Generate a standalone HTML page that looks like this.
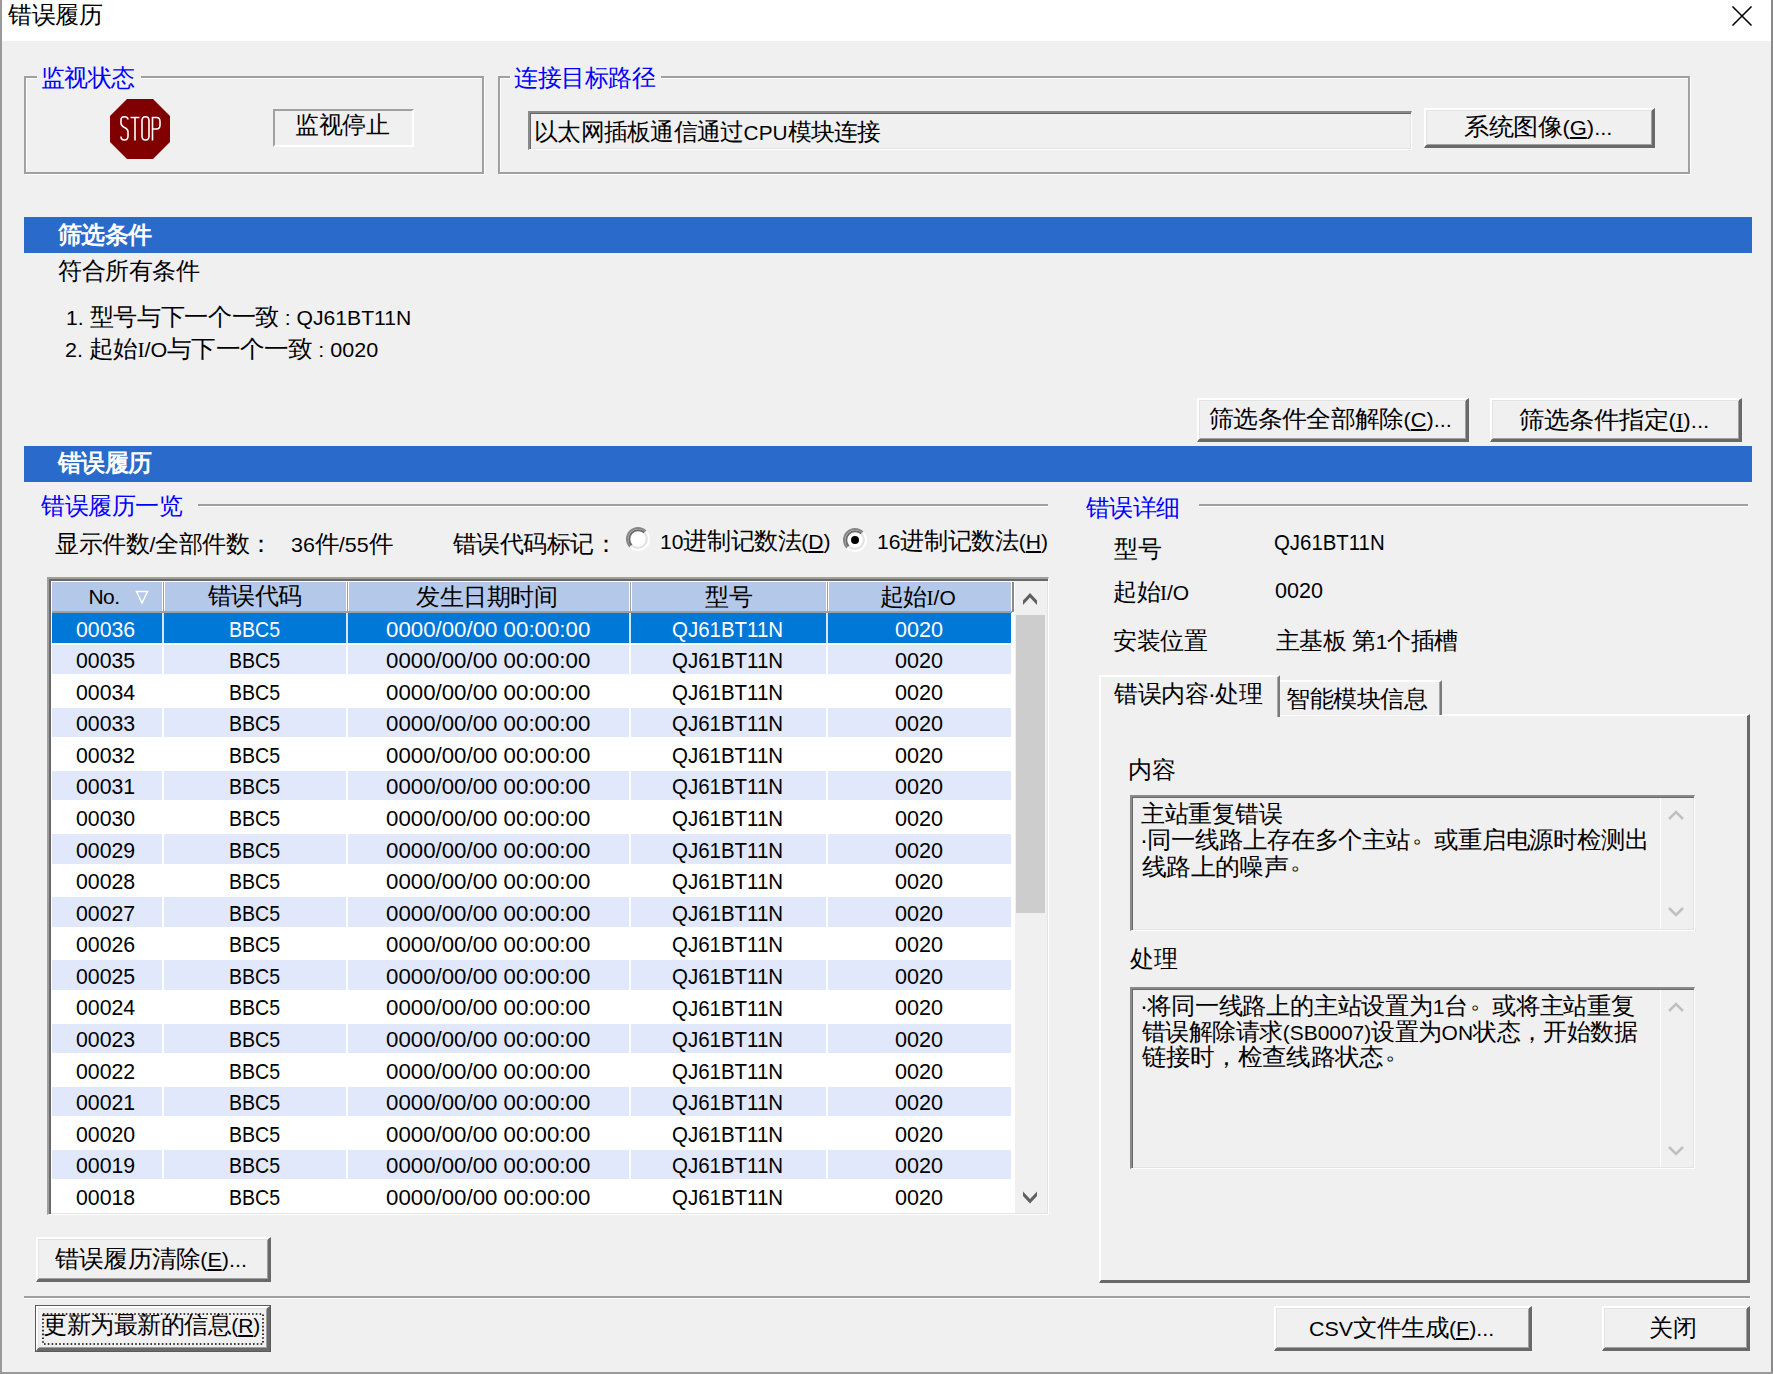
<!DOCTYPE html><html><head><meta charset="utf-8"><title>错误履历</title><style>
*{box-sizing:border-box;margin:0;padding:0}
html,body{width:1773px;height:1374px;overflow:hidden}
body{position:relative;background:#f0f0f0;font-family:"Liberation Sans",sans-serif;font-size:23.5px;color:#000}
.a{position:absolute}
.t{position:absolute;white-space:nowrap;line-height:1;letter-spacing:-0.5px}
.l{letter-spacing:0}
i.s{font-style:normal;font-family:"Liberation Serif",serif}
.gb{position:absolute;border:2px solid #a0a0a0;box-shadow:inset 1px 1px 0 #fff,1px 1px 0 #fff}
.gl{position:absolute;background:#f0f0f0}
.btn{position:absolute;background:#f0f0f0;border-style:solid;border-width:2px 3px 3px 2px;border-color:#fff #696969 #696969 #fff;box-shadow:inset 1px 1px 0 #e3e3e3,inset -1px -1px 0 #a0a0a0}
.sunk{position:absolute;border-style:solid;border-width:2px 1px 1px 2px;border-color:#8a8a8a #fff #fff #8a8a8a;box-shadow:inset 1px 1px 0 #696969,inset -1px -1px 0 #e3e3e3}
.bar{position:absolute;left:24px;width:1728px;height:36px;background:#2a6acb}
.hdr{position:absolute;height:30px;background:#b4c8e9}
.sep{position:absolute;height:2px;background:#a0a0a0;box-shadow:0 1px 0 #fff}
</style></head><body>
<div class="a" style="left:0;top:0;width:1773px;height:41px;background:#fff"></div>
<div class="t" style="left:8.00px;top:3.50px;font-size:23.5px;color:#000;">错误履历</div>
<svg class="a" style="left:1730px;top:4px" width="24" height="24" viewBox="0 0 24 24"><path d="M2.5 2.5L21.5 21.5M21.5 2.5L2.5 21.5" stroke="#000" stroke-width="1.6"/></svg>
<div class="a" style="left:0;top:0;width:2px;height:1374px;background:#9a9a9a"></div>
<div class="a" style="left:1771px;top:0;width:2px;height:1374px;background:#8a8a8a"></div>
<div class="a" style="left:0;top:1372px;width:1773px;height:2px;background:#9a9a9a"></div>
<div class="gb" style="left:24px;top:76px;width:460px;height:98px"></div>
<div class="gl" style="left:37px;top:70px;width:104px;height:12px"></div>
<div class="t" style="left:40.60px;top:67.05px;font-size:23.5px;color:#0000ff;">监视状态</div>
<svg class="a" style="left:110px;top:99px" width="60" height="60" viewBox="0 0 60 60"><polygon points="17,0 43,0 60,17 60,43 43,60 17,60 0,43 0,17" fill="#800000"/>
<g fill="none" stroke="#fff" stroke-width="1.6">
<path d="M18 20.5 Q18 17.8 14.5 17.8 Q11 17.8 11 21 L11 24 Q11 27 14.5 28.5 Q18 30 18 33 L18 37 Q18 41 14.5 41 Q11 41 11 37.5"/>
<path d="M20.5 18.5 H29.5 M25 18.5 V41.5"/>
<path d="M35.5 17.8 Q32 17.8 32 22 V37 Q32 41 35.5 41 Q39 41 39 37 V22 Q39 17.8 35.5 17.8Z"/>
<path d="M42.5 41.5 V18.5 H46.5 Q50 18.5 50 22.5 V26 Q50 30 46.5 30 H42.5"/>
</g></svg>
<div class="a" style="left:273px;top:109px;width:141px;height:38px;border-style:solid;border-width:2px;border-color:#a0a0a0 #fff #fff #a0a0a0"></div>
<div class="t" style="left:295.00px;top:114.30px;font-size:23.5px;color:#000;">监视停止</div>
<div class="gb" style="left:498px;top:76px;width:1192px;height:98px"></div>
<div class="gl" style="left:510px;top:70px;width:151px;height:12px"></div>
<div class="t" style="left:514.00px;top:67.15px;font-size:23.5px;color:#0000ff;">连接目标路径</div>
<div class="sunk" style="left:528px;top:111px;width:884px;height:39px"></div>
<div class="t" style="left:534.00px;top:120.55px;font-size:23.5px;color:#000;transform:scaleX(0.9910);transform-origin:0 0;">以太网插板通信通过<span class="l" style="font-size:21px;letter-spacing:0px">CPU</span>模块连接</div>
<div class="btn" style="left:1424px;top:108px;width:231px;height:40px"></div>
<div class="t" style="left:1464.00px;top:116.15px;font-size:23.5px;color:#000;transform:scaleX(1.0468);transform-origin:0 0;">系统图像<span class="l" style="font-size:21px;letter-spacing:0px">(</span><u><span class="l" style="font-size:21px;letter-spacing:0px">G</span></u><span class="l" style="font-size:21px;letter-spacing:0px">)...</span></div>
<div class="bar" style="top:217px"></div>
<div class="t" style="left:57.60px;top:224.10px;font-size:23.5px;color:#fff;font-weight:bold">筛选条件</div>
<div class="t" style="left:58.00px;top:260.40px;font-size:23.5px;color:#000;">符合所有条件</div>
<div class="t" style="left:66.00px;top:305.75px;font-size:23.5px;color:#000;transform:scaleX(1.0059);transform-origin:0 0;"><span class="l" style="font-size:21px;letter-spacing:0px">1.</span> 型号与下一个一致 <span class="l" style="font-size:21px;letter-spacing:0px">: QJ61BT11N</span></div>
<div class="t" style="left:65.00px;top:338.15px;font-size:23.5px;color:#000;transform:scaleX(1.0265);transform-origin:0 0;"><span class="l" style="font-size:21px;letter-spacing:0px">2.</span> 起始<i class="s"><span class="l" style="font-size:21px;letter-spacing:0px">I</span></i><span class="l" style="font-size:21px;letter-spacing:0px">/O</span>与下一个一致 <span class="l" style="font-size:21px;letter-spacing:0px">: 0020</span></div>
<div class="btn" style="left:1197px;top:398px;width:272px;height:44px"></div>
<div class="t" style="left:1209.20px;top:408.10px;font-size:23.5px;color:#000;transform:scaleX(1.0345);transform-origin:0 0;">筛选条件全部解除<span class="l" style="font-size:21px;letter-spacing:0px">(</span><u><span class="l" style="font-size:21px;letter-spacing:0px">C</span></u><span class="l" style="font-size:21px;letter-spacing:0px">)...</span></div>
<div class="btn" style="left:1490px;top:398px;width:252px;height:44px"></div>
<div class="t" style="left:1519.00px;top:408.75px;font-size:23.5px;color:#000;transform:scaleX(1.0602);transform-origin:0 0;">筛选条件指定<span class="l" style="font-size:21px;letter-spacing:0px">(</span><u><i class="s"><span class="l" style="font-size:21px;letter-spacing:0px">I</span></i></u><span class="l" style="font-size:21px;letter-spacing:0px">)...</span></div>
<div class="bar" style="top:446px"></div>
<div class="t" style="left:57.60px;top:452.00px;font-size:23.5px;color:#fff;font-weight:bold">错误履历</div>
<div class="sep" style="left:198px;top:504px;width:850px"></div>
<div class="t" style="left:41.20px;top:494.75px;font-size:23.5px;color:#0000ff;">错误履历一览</div>
<div class="t" style="left:55.40px;top:533.15px;font-size:23.5px;color:#000;">显示件数<span class="l" style="font-size:21px;letter-spacing:0px">/</span>全部件数：</div>
<div class="t" style="left:291.40px;top:533.40px;font-size:23.5px;color:#000;transform:scaleX(1.0207);transform-origin:0 0;"><span class="l" style="font-size:21px;letter-spacing:0px">36</span>件<span class="l" style="font-size:21px;letter-spacing:0px">/55</span>件</div>
<div class="t" style="left:452.60px;top:532.65px;font-size:23.5px;color:#000;">错误代码标记：</div>
<div class="t" style="left:660.00px;top:530.25px;font-size:23.5px;color:#000;transform:scaleX(1.0030);transform-origin:0 0;"><span class="l" style="font-size:21px;letter-spacing:0px">10</span>进制记数法<span class="l" style="font-size:21px;letter-spacing:0px">(</span><u><span class="l" style="font-size:21px;letter-spacing:0px">D</span></u><span class="l" style="font-size:21px;letter-spacing:0px">)</span></div>
<div class="t" style="left:877.00px;top:530.25px;font-size:23.5px;color:#000;transform:scaleX(1.0060);transform-origin:0 0;"><span class="l" style="font-size:21px;letter-spacing:0px">16</span>进制记数法<span class="l" style="font-size:21px;letter-spacing:0px">(</span><u><span class="l" style="font-size:21px;letter-spacing:0px">H</span></u><span class="l" style="font-size:21px;letter-spacing:0px">)</span></div>
<svg class="a" style="left:625.3px;top:526.4px" width="26" height="26" viewBox="0 0 26 26"><circle cx="13" cy="13" r="8" fill="#fff"/><path d="M20.78 5.22 A11 11 0 0 0 5.22 20.78" fill="none" stroke="#858585" stroke-width="2"/><path d="M19.36 6.64 A9 9 0 0 0 6.64 19.36" fill="none" stroke="#6a6a6a" stroke-width="2"/><path d="M5.22 20.78 A11 11 0 0 0 20.78 5.22" fill="none" stroke="#fff" stroke-width="2"/><path d="M6.64 19.36 A9 9 0 0 0 19.36 6.64" fill="none" stroke="#e3e3e3" stroke-width="2"/></svg>
<svg class="a" style="left:842.4px;top:526.6px" width="26" height="26" viewBox="0 0 26 26"><circle cx="13" cy="13" r="8" fill="#fff"/><path d="M20.78 5.22 A11 11 0 0 0 5.22 20.78" fill="none" stroke="#858585" stroke-width="2"/><path d="M19.36 6.64 A9 9 0 0 0 6.64 19.36" fill="none" stroke="#6a6a6a" stroke-width="2"/><path d="M5.22 20.78 A11 11 0 0 0 20.78 5.22" fill="none" stroke="#fff" stroke-width="2"/><path d="M6.64 19.36 A9 9 0 0 0 19.36 6.64" fill="none" stroke="#e3e3e3" stroke-width="2"/><circle cx="13" cy="13" r="4" fill="#000"/></svg>
<div class="a" style="left:47px;top:577px;width:1002px;height:638px;background:#fff;border-style:solid;border-width:2px 1px 1px 2px;border-color:#a0a0a0 #fff #fff #a0a0a0;box-shadow:inset 2px 2px 0 #696969,inset -1px -1px 0 #e3e3e3"></div>
<div class="hdr" style="left:52px;width:110px;top:582px"></div>
<div class="hdr" style="left:164px;width:182px;top:582px"></div>
<div class="hdr" style="left:348px;width:281px;top:582px"></div>
<div class="hdr" style="left:631px;width:195px;top:582px"></div>
<div class="hdr" style="left:828px;width:183px;top:582px"></div>
<div class="a" style="left:52px;top:611px;width:960px;height:2px;background:#a0a0a0"></div>
<div class="a" style="left:163px;top:582px;width:1px;height:29px;background:#a0a0a0"></div>
<div class="a" style="left:164px;top:582px;width:1px;height:29px;background:#fff"></div>
<div class="a" style="left:347px;top:582px;width:1px;height:29px;background:#a0a0a0"></div>
<div class="a" style="left:348px;top:582px;width:1px;height:29px;background:#fff"></div>
<div class="a" style="left:630px;top:582px;width:1px;height:29px;background:#a0a0a0"></div>
<div class="a" style="left:631px;top:582px;width:1px;height:29px;background:#fff"></div>
<div class="a" style="left:827px;top:582px;width:1px;height:29px;background:#a0a0a0"></div>
<div class="a" style="left:828px;top:582px;width:1px;height:29px;background:#fff"></div>
<div class="t" style="left:88.40px;top:585.75px;font-size:21px;color:#000;">No.</div>
<svg class="a" style="left:135px;top:589px" width="14" height="16" viewBox="0 0 14 16"><path d="M1.5 2.5 H12.5 L7 14Z" fill="none" stroke="#fff" stroke-width="1.5"/></svg>
<div class="t" style="left:207.80px;top:585.25px;font-size:23.5px;color:#000;">错误代码</div>
<div class="t" style="left:416.00px;top:586.25px;font-size:23.5px;color:#000;">发生日期时间</div>
<div class="t" style="left:705.20px;top:586.30px;font-size:23.5px;color:#000;">型号</div>
<div class="t" style="left:879.60px;top:586.30px;font-size:23.5px;color:#000;">起始<i class="s"><span class="l" style="font-size:21px;letter-spacing:0px">I</span></i><span class="l" style="font-size:21px;letter-spacing:0px">/O</span></div>
<div class="a" style="left:52px;top:613.00px;width:110px;height:29.58px;background:#0078d7"></div>
<div class="a" style="left:162px;top:613.00px;width:2px;height:29.58px;background:#d2e5f8"></div>
<div class="a" style="left:164px;top:613.00px;width:182px;height:29.58px;background:#0078d7"></div>
<div class="a" style="left:346px;top:613.00px;width:2px;height:29.58px;background:#d2e5f8"></div>
<div class="a" style="left:348px;top:613.00px;width:281px;height:29.58px;background:#0078d7"></div>
<div class="a" style="left:629px;top:613.00px;width:2px;height:29.58px;background:#d2e5f8"></div>
<div class="a" style="left:631px;top:613.00px;width:195px;height:29.58px;background:#0078d7"></div>
<div class="a" style="left:826px;top:613.00px;width:2px;height:29.58px;background:#d2e5f8"></div>
<div class="a" style="left:828px;top:613.00px;width:183px;height:29.58px;background:#0078d7"></div>
<div class="t" style="left:76.30px;top:618.50px;font-size:22px;color:#fff;letter-spacing:0;transform:scaleX(0.9676);transform-origin:0 0;">00036</div>
<div class="t" style="left:229.40px;top:618.50px;font-size:22px;color:#fff;letter-spacing:0;transform:scaleX(0.8884);transform-origin:0 0;">BBC5</div>
<div class="t" style="left:385.90px;top:618.50px;font-size:22px;color:#fff;letter-spacing:0;transform:scaleX(1.0120);transform-origin:0 0;">0000/00/00 00:00:00</div>
<div class="t" style="left:672.30px;top:618.58px;font-size:22px;color:#fff;letter-spacing:0;transform:scaleX(0.9304);transform-origin:0 0;">QJ61BT11N</div>
<div class="t" style="left:895.20px;top:618.50px;font-size:22px;color:#fff;letter-spacing:0;transform:scaleX(0.9811);transform-origin:0 0;">0020</div>
<div class="a" style="left:52px;top:644.58px;width:110px;height:29.58px;background:#e1e8fc"></div>
<div class="a" style="left:164px;top:644.58px;width:182px;height:29.58px;background:#e1e8fc"></div>
<div class="a" style="left:348px;top:644.58px;width:281px;height:29.58px;background:#e1e8fc"></div>
<div class="a" style="left:631px;top:644.58px;width:195px;height:29.58px;background:#e1e8fc"></div>
<div class="a" style="left:828px;top:644.58px;width:183px;height:29.58px;background:#e1e8fc"></div>
<div class="t" style="left:76.30px;top:650.08px;font-size:22px;color:#000;transform:scaleX(0.9676);transform-origin:0 0;letter-spacing:0">00035</div>
<div class="t" style="left:229.40px;top:650.08px;font-size:22px;color:#000;transform:scaleX(0.8884);transform-origin:0 0;letter-spacing:0">BBC5</div>
<div class="t" style="left:385.90px;top:650.08px;font-size:22px;color:#000;transform:scaleX(1.0120);transform-origin:0 0;letter-spacing:0">0000/00/00 00:00:00</div>
<div class="t" style="left:672.30px;top:650.16px;font-size:22px;color:#000;transform:scaleX(0.9304);transform-origin:0 0;letter-spacing:0">QJ61BT11N</div>
<div class="t" style="left:895.20px;top:650.08px;font-size:22px;color:#000;transform:scaleX(0.9811);transform-origin:0 0;letter-spacing:0">0020</div>
<div class="a" style="left:52px;top:676.16px;width:110px;height:29.58px;background:#fff"></div>
<div class="a" style="left:164px;top:676.16px;width:182px;height:29.58px;background:#fff"></div>
<div class="a" style="left:348px;top:676.16px;width:281px;height:29.58px;background:#fff"></div>
<div class="a" style="left:631px;top:676.16px;width:195px;height:29.58px;background:#fff"></div>
<div class="a" style="left:828px;top:676.16px;width:183px;height:29.58px;background:#fff"></div>
<div class="t" style="left:76.30px;top:681.66px;font-size:22px;color:#000;letter-spacing:0;transform:scaleX(0.9676);transform-origin:0 0;">00034</div>
<div class="t" style="left:229.40px;top:681.66px;font-size:22px;color:#000;letter-spacing:0;transform:scaleX(0.8884);transform-origin:0 0;">BBC5</div>
<div class="t" style="left:385.90px;top:681.66px;font-size:22px;color:#000;letter-spacing:0;transform:scaleX(1.0120);transform-origin:0 0;">0000/00/00 00:00:00</div>
<div class="t" style="left:672.30px;top:681.74px;font-size:22px;color:#000;letter-spacing:0;transform:scaleX(0.9304);transform-origin:0 0;">QJ61BT11N</div>
<div class="t" style="left:895.20px;top:681.66px;font-size:22px;color:#000;letter-spacing:0;transform:scaleX(0.9811);transform-origin:0 0;">0020</div>
<div class="a" style="left:52px;top:707.74px;width:110px;height:29.58px;background:#e1e8fc"></div>
<div class="a" style="left:164px;top:707.74px;width:182px;height:29.58px;background:#e1e8fc"></div>
<div class="a" style="left:348px;top:707.74px;width:281px;height:29.58px;background:#e1e8fc"></div>
<div class="a" style="left:631px;top:707.74px;width:195px;height:29.58px;background:#e1e8fc"></div>
<div class="a" style="left:828px;top:707.74px;width:183px;height:29.58px;background:#e1e8fc"></div>
<div class="t" style="left:76.30px;top:713.24px;font-size:22px;color:#000;letter-spacing:0;transform:scaleX(0.9676);transform-origin:0 0;">00033</div>
<div class="t" style="left:229.40px;top:713.24px;font-size:22px;color:#000;letter-spacing:0;transform:scaleX(0.8884);transform-origin:0 0;">BBC5</div>
<div class="t" style="left:385.90px;top:713.24px;font-size:22px;color:#000;letter-spacing:0;transform:scaleX(1.0120);transform-origin:0 0;">0000/00/00 00:00:00</div>
<div class="t" style="left:672.30px;top:713.32px;font-size:22px;color:#000;letter-spacing:0;transform:scaleX(0.9304);transform-origin:0 0;">QJ61BT11N</div>
<div class="t" style="left:895.20px;top:713.24px;font-size:22px;color:#000;letter-spacing:0;transform:scaleX(0.9811);transform-origin:0 0;">0020</div>
<div class="a" style="left:52px;top:739.32px;width:110px;height:29.58px;background:#fff"></div>
<div class="a" style="left:164px;top:739.32px;width:182px;height:29.58px;background:#fff"></div>
<div class="a" style="left:348px;top:739.32px;width:281px;height:29.58px;background:#fff"></div>
<div class="a" style="left:631px;top:739.32px;width:195px;height:29.58px;background:#fff"></div>
<div class="a" style="left:828px;top:739.32px;width:183px;height:29.58px;background:#fff"></div>
<div class="t" style="left:76.30px;top:744.82px;font-size:22px;color:#000;letter-spacing:0;transform:scaleX(0.9676);transform-origin:0 0;">00032</div>
<div class="t" style="left:229.40px;top:744.82px;font-size:22px;color:#000;letter-spacing:0;transform:scaleX(0.8884);transform-origin:0 0;">BBC5</div>
<div class="t" style="left:385.90px;top:744.82px;font-size:22px;color:#000;letter-spacing:0;transform:scaleX(1.0120);transform-origin:0 0;">0000/00/00 00:00:00</div>
<div class="t" style="left:672.30px;top:744.90px;font-size:22px;color:#000;letter-spacing:0;transform:scaleX(0.9304);transform-origin:0 0;">QJ61BT11N</div>
<div class="t" style="left:895.20px;top:744.82px;font-size:22px;color:#000;letter-spacing:0;transform:scaleX(0.9811);transform-origin:0 0;">0020</div>
<div class="a" style="left:52px;top:770.90px;width:110px;height:29.58px;background:#e1e8fc"></div>
<div class="a" style="left:164px;top:770.90px;width:182px;height:29.58px;background:#e1e8fc"></div>
<div class="a" style="left:348px;top:770.90px;width:281px;height:29.58px;background:#e1e8fc"></div>
<div class="a" style="left:631px;top:770.90px;width:195px;height:29.58px;background:#e1e8fc"></div>
<div class="a" style="left:828px;top:770.90px;width:183px;height:29.58px;background:#e1e8fc"></div>
<div class="t" style="left:76.30px;top:776.40px;font-size:22px;color:#000;letter-spacing:0;transform:scaleX(0.9676);transform-origin:0 0;">00031</div>
<div class="t" style="left:229.40px;top:776.40px;font-size:22px;color:#000;letter-spacing:0;transform:scaleX(0.8884);transform-origin:0 0;">BBC5</div>
<div class="t" style="left:385.90px;top:776.40px;font-size:22px;color:#000;letter-spacing:0;transform:scaleX(1.0120);transform-origin:0 0;">0000/00/00 00:00:00</div>
<div class="t" style="left:672.30px;top:776.48px;font-size:22px;color:#000;letter-spacing:0;transform:scaleX(0.9304);transform-origin:0 0;">QJ61BT11N</div>
<div class="t" style="left:895.20px;top:776.40px;font-size:22px;color:#000;letter-spacing:0;transform:scaleX(0.9811);transform-origin:0 0;">0020</div>
<div class="a" style="left:52px;top:802.48px;width:110px;height:29.58px;background:#fff"></div>
<div class="a" style="left:164px;top:802.48px;width:182px;height:29.58px;background:#fff"></div>
<div class="a" style="left:348px;top:802.48px;width:281px;height:29.58px;background:#fff"></div>
<div class="a" style="left:631px;top:802.48px;width:195px;height:29.58px;background:#fff"></div>
<div class="a" style="left:828px;top:802.48px;width:183px;height:29.58px;background:#fff"></div>
<div class="t" style="left:76.30px;top:807.98px;font-size:22px;color:#000;letter-spacing:0;transform:scaleX(0.9676);transform-origin:0 0;">00030</div>
<div class="t" style="left:229.40px;top:807.98px;font-size:22px;color:#000;letter-spacing:0;transform:scaleX(0.8884);transform-origin:0 0;">BBC5</div>
<div class="t" style="left:385.90px;top:807.98px;font-size:22px;color:#000;letter-spacing:0;transform:scaleX(1.0120);transform-origin:0 0;">0000/00/00 00:00:00</div>
<div class="t" style="left:672.30px;top:808.06px;font-size:22px;color:#000;letter-spacing:0;transform:scaleX(0.9304);transform-origin:0 0;">QJ61BT11N</div>
<div class="t" style="left:895.20px;top:807.98px;font-size:22px;color:#000;letter-spacing:0;transform:scaleX(0.9811);transform-origin:0 0;">0020</div>
<div class="a" style="left:52px;top:834.06px;width:110px;height:29.58px;background:#e1e8fc"></div>
<div class="a" style="left:164px;top:834.06px;width:182px;height:29.58px;background:#e1e8fc"></div>
<div class="a" style="left:348px;top:834.06px;width:281px;height:29.58px;background:#e1e8fc"></div>
<div class="a" style="left:631px;top:834.06px;width:195px;height:29.58px;background:#e1e8fc"></div>
<div class="a" style="left:828px;top:834.06px;width:183px;height:29.58px;background:#e1e8fc"></div>
<div class="t" style="left:76.30px;top:839.56px;font-size:22px;color:#000;letter-spacing:0;transform:scaleX(0.9676);transform-origin:0 0;">00029</div>
<div class="t" style="left:229.40px;top:839.56px;font-size:22px;color:#000;letter-spacing:0;transform:scaleX(0.8884);transform-origin:0 0;">BBC5</div>
<div class="t" style="left:385.90px;top:839.56px;font-size:22px;color:#000;letter-spacing:0;transform:scaleX(1.0120);transform-origin:0 0;">0000/00/00 00:00:00</div>
<div class="t" style="left:672.30px;top:839.64px;font-size:22px;color:#000;letter-spacing:0;transform:scaleX(0.9304);transform-origin:0 0;">QJ61BT11N</div>
<div class="t" style="left:895.20px;top:839.56px;font-size:22px;color:#000;letter-spacing:0;transform:scaleX(0.9811);transform-origin:0 0;">0020</div>
<div class="a" style="left:52px;top:865.64px;width:110px;height:29.58px;background:#fff"></div>
<div class="a" style="left:164px;top:865.64px;width:182px;height:29.58px;background:#fff"></div>
<div class="a" style="left:348px;top:865.64px;width:281px;height:29.58px;background:#fff"></div>
<div class="a" style="left:631px;top:865.64px;width:195px;height:29.58px;background:#fff"></div>
<div class="a" style="left:828px;top:865.64px;width:183px;height:29.58px;background:#fff"></div>
<div class="t" style="left:76.30px;top:871.14px;font-size:22px;color:#000;letter-spacing:0;transform:scaleX(0.9676);transform-origin:0 0;">00028</div>
<div class="t" style="left:229.40px;top:871.14px;font-size:22px;color:#000;letter-spacing:0;transform:scaleX(0.8884);transform-origin:0 0;">BBC5</div>
<div class="t" style="left:385.90px;top:871.14px;font-size:22px;color:#000;letter-spacing:0;transform:scaleX(1.0120);transform-origin:0 0;">0000/00/00 00:00:00</div>
<div class="t" style="left:672.30px;top:871.22px;font-size:22px;color:#000;letter-spacing:0;transform:scaleX(0.9304);transform-origin:0 0;">QJ61BT11N</div>
<div class="t" style="left:895.20px;top:871.14px;font-size:22px;color:#000;letter-spacing:0;transform:scaleX(0.9811);transform-origin:0 0;">0020</div>
<div class="a" style="left:52px;top:897.22px;width:110px;height:29.58px;background:#e1e8fc"></div>
<div class="a" style="left:164px;top:897.22px;width:182px;height:29.58px;background:#e1e8fc"></div>
<div class="a" style="left:348px;top:897.22px;width:281px;height:29.58px;background:#e1e8fc"></div>
<div class="a" style="left:631px;top:897.22px;width:195px;height:29.58px;background:#e1e8fc"></div>
<div class="a" style="left:828px;top:897.22px;width:183px;height:29.58px;background:#e1e8fc"></div>
<div class="t" style="left:76.30px;top:902.72px;font-size:22px;color:#000;letter-spacing:0;transform:scaleX(0.9676);transform-origin:0 0;">00027</div>
<div class="t" style="left:229.40px;top:902.72px;font-size:22px;color:#000;letter-spacing:0;transform:scaleX(0.8884);transform-origin:0 0;">BBC5</div>
<div class="t" style="left:385.90px;top:902.72px;font-size:22px;color:#000;letter-spacing:0;transform:scaleX(1.0120);transform-origin:0 0;">0000/00/00 00:00:00</div>
<div class="t" style="left:672.30px;top:902.80px;font-size:22px;color:#000;letter-spacing:0;transform:scaleX(0.9304);transform-origin:0 0;">QJ61BT11N</div>
<div class="t" style="left:895.20px;top:902.72px;font-size:22px;color:#000;letter-spacing:0;transform:scaleX(0.9811);transform-origin:0 0;">0020</div>
<div class="a" style="left:52px;top:928.80px;width:110px;height:29.58px;background:#fff"></div>
<div class="a" style="left:164px;top:928.80px;width:182px;height:29.58px;background:#fff"></div>
<div class="a" style="left:348px;top:928.80px;width:281px;height:29.58px;background:#fff"></div>
<div class="a" style="left:631px;top:928.80px;width:195px;height:29.58px;background:#fff"></div>
<div class="a" style="left:828px;top:928.80px;width:183px;height:29.58px;background:#fff"></div>
<div class="t" style="left:76.30px;top:934.30px;font-size:22px;color:#000;letter-spacing:0;transform:scaleX(0.9676);transform-origin:0 0;">00026</div>
<div class="t" style="left:229.40px;top:934.30px;font-size:22px;color:#000;letter-spacing:0;transform:scaleX(0.8884);transform-origin:0 0;">BBC5</div>
<div class="t" style="left:385.90px;top:934.30px;font-size:22px;color:#000;letter-spacing:0;transform:scaleX(1.0120);transform-origin:0 0;">0000/00/00 00:00:00</div>
<div class="t" style="left:672.30px;top:934.38px;font-size:22px;color:#000;letter-spacing:0;transform:scaleX(0.9304);transform-origin:0 0;">QJ61BT11N</div>
<div class="t" style="left:895.20px;top:934.30px;font-size:22px;color:#000;letter-spacing:0;transform:scaleX(0.9811);transform-origin:0 0;">0020</div>
<div class="a" style="left:52px;top:960.38px;width:110px;height:29.58px;background:#e1e8fc"></div>
<div class="a" style="left:164px;top:960.38px;width:182px;height:29.58px;background:#e1e8fc"></div>
<div class="a" style="left:348px;top:960.38px;width:281px;height:29.58px;background:#e1e8fc"></div>
<div class="a" style="left:631px;top:960.38px;width:195px;height:29.58px;background:#e1e8fc"></div>
<div class="a" style="left:828px;top:960.38px;width:183px;height:29.58px;background:#e1e8fc"></div>
<div class="t" style="left:76.30px;top:965.88px;font-size:22px;color:#000;letter-spacing:0;transform:scaleX(0.9676);transform-origin:0 0;">00025</div>
<div class="t" style="left:229.40px;top:965.88px;font-size:22px;color:#000;letter-spacing:0;transform:scaleX(0.8884);transform-origin:0 0;">BBC5</div>
<div class="t" style="left:385.90px;top:965.88px;font-size:22px;color:#000;letter-spacing:0;transform:scaleX(1.0120);transform-origin:0 0;">0000/00/00 00:00:00</div>
<div class="t" style="left:672.30px;top:965.96px;font-size:22px;color:#000;letter-spacing:0;transform:scaleX(0.9304);transform-origin:0 0;">QJ61BT11N</div>
<div class="t" style="left:895.20px;top:965.88px;font-size:22px;color:#000;letter-spacing:0;transform:scaleX(0.9811);transform-origin:0 0;">0020</div>
<div class="a" style="left:52px;top:991.96px;width:110px;height:29.58px;background:#fff"></div>
<div class="a" style="left:164px;top:991.96px;width:182px;height:29.58px;background:#fff"></div>
<div class="a" style="left:348px;top:991.96px;width:281px;height:29.58px;background:#fff"></div>
<div class="a" style="left:631px;top:991.96px;width:195px;height:29.58px;background:#fff"></div>
<div class="a" style="left:828px;top:991.96px;width:183px;height:29.58px;background:#fff"></div>
<div class="t" style="left:76.30px;top:997.46px;font-size:22px;color:#000;letter-spacing:0;transform:scaleX(0.9676);transform-origin:0 0;">00024</div>
<div class="t" style="left:229.40px;top:997.46px;font-size:22px;color:#000;letter-spacing:0;transform:scaleX(0.8884);transform-origin:0 0;">BBC5</div>
<div class="t" style="left:385.90px;top:997.46px;font-size:22px;color:#000;letter-spacing:0;transform:scaleX(1.0120);transform-origin:0 0;">0000/00/00 00:00:00</div>
<div class="t" style="left:672.30px;top:997.54px;font-size:22px;color:#000;letter-spacing:0;transform:scaleX(0.9304);transform-origin:0 0;">QJ61BT11N</div>
<div class="t" style="left:895.20px;top:997.46px;font-size:22px;color:#000;letter-spacing:0;transform:scaleX(0.9811);transform-origin:0 0;">0020</div>
<div class="a" style="left:52px;top:1023.54px;width:110px;height:29.58px;background:#e1e8fc"></div>
<div class="a" style="left:164px;top:1023.54px;width:182px;height:29.58px;background:#e1e8fc"></div>
<div class="a" style="left:348px;top:1023.54px;width:281px;height:29.58px;background:#e1e8fc"></div>
<div class="a" style="left:631px;top:1023.54px;width:195px;height:29.58px;background:#e1e8fc"></div>
<div class="a" style="left:828px;top:1023.54px;width:183px;height:29.58px;background:#e1e8fc"></div>
<div class="t" style="left:76.30px;top:1029.04px;font-size:22px;color:#000;letter-spacing:0;transform:scaleX(0.9676);transform-origin:0 0;">00023</div>
<div class="t" style="left:229.40px;top:1029.04px;font-size:22px;color:#000;letter-spacing:0;transform:scaleX(0.8884);transform-origin:0 0;">BBC5</div>
<div class="t" style="left:385.90px;top:1029.04px;font-size:22px;color:#000;letter-spacing:0;transform:scaleX(1.0120);transform-origin:0 0;">0000/00/00 00:00:00</div>
<div class="t" style="left:672.30px;top:1029.12px;font-size:22px;color:#000;letter-spacing:0;transform:scaleX(0.9304);transform-origin:0 0;">QJ61BT11N</div>
<div class="t" style="left:895.20px;top:1029.04px;font-size:22px;color:#000;letter-spacing:0;transform:scaleX(0.9811);transform-origin:0 0;">0020</div>
<div class="a" style="left:52px;top:1055.12px;width:110px;height:29.58px;background:#fff"></div>
<div class="a" style="left:164px;top:1055.12px;width:182px;height:29.58px;background:#fff"></div>
<div class="a" style="left:348px;top:1055.12px;width:281px;height:29.58px;background:#fff"></div>
<div class="a" style="left:631px;top:1055.12px;width:195px;height:29.58px;background:#fff"></div>
<div class="a" style="left:828px;top:1055.12px;width:183px;height:29.58px;background:#fff"></div>
<div class="t" style="left:76.30px;top:1060.62px;font-size:22px;color:#000;letter-spacing:0;transform:scaleX(0.9676);transform-origin:0 0;">00022</div>
<div class="t" style="left:229.40px;top:1060.62px;font-size:22px;color:#000;letter-spacing:0;transform:scaleX(0.8884);transform-origin:0 0;">BBC5</div>
<div class="t" style="left:385.90px;top:1060.62px;font-size:22px;color:#000;letter-spacing:0;transform:scaleX(1.0120);transform-origin:0 0;">0000/00/00 00:00:00</div>
<div class="t" style="left:672.30px;top:1060.70px;font-size:22px;color:#000;letter-spacing:0;transform:scaleX(0.9304);transform-origin:0 0;">QJ61BT11N</div>
<div class="t" style="left:895.20px;top:1060.62px;font-size:22px;color:#000;letter-spacing:0;transform:scaleX(0.9811);transform-origin:0 0;">0020</div>
<div class="a" style="left:52px;top:1086.70px;width:110px;height:29.58px;background:#e1e8fc"></div>
<div class="a" style="left:164px;top:1086.70px;width:182px;height:29.58px;background:#e1e8fc"></div>
<div class="a" style="left:348px;top:1086.70px;width:281px;height:29.58px;background:#e1e8fc"></div>
<div class="a" style="left:631px;top:1086.70px;width:195px;height:29.58px;background:#e1e8fc"></div>
<div class="a" style="left:828px;top:1086.70px;width:183px;height:29.58px;background:#e1e8fc"></div>
<div class="t" style="left:76.30px;top:1092.20px;font-size:22px;color:#000;letter-spacing:0;transform:scaleX(0.9676);transform-origin:0 0;">00021</div>
<div class="t" style="left:229.40px;top:1092.20px;font-size:22px;color:#000;letter-spacing:0;transform:scaleX(0.8884);transform-origin:0 0;">BBC5</div>
<div class="t" style="left:385.90px;top:1092.20px;font-size:22px;color:#000;letter-spacing:0;transform:scaleX(1.0120);transform-origin:0 0;">0000/00/00 00:00:00</div>
<div class="t" style="left:672.30px;top:1092.28px;font-size:22px;color:#000;letter-spacing:0;transform:scaleX(0.9304);transform-origin:0 0;">QJ61BT11N</div>
<div class="t" style="left:895.20px;top:1092.20px;font-size:22px;color:#000;letter-spacing:0;transform:scaleX(0.9811);transform-origin:0 0;">0020</div>
<div class="a" style="left:52px;top:1118.28px;width:110px;height:29.58px;background:#fff"></div>
<div class="a" style="left:164px;top:1118.28px;width:182px;height:29.58px;background:#fff"></div>
<div class="a" style="left:348px;top:1118.28px;width:281px;height:29.58px;background:#fff"></div>
<div class="a" style="left:631px;top:1118.28px;width:195px;height:29.58px;background:#fff"></div>
<div class="a" style="left:828px;top:1118.28px;width:183px;height:29.58px;background:#fff"></div>
<div class="t" style="left:76.30px;top:1123.78px;font-size:22px;color:#000;letter-spacing:0;transform:scaleX(0.9676);transform-origin:0 0;">00020</div>
<div class="t" style="left:229.40px;top:1123.78px;font-size:22px;color:#000;letter-spacing:0;transform:scaleX(0.8884);transform-origin:0 0;">BBC5</div>
<div class="t" style="left:385.90px;top:1123.78px;font-size:22px;color:#000;letter-spacing:0;transform:scaleX(1.0120);transform-origin:0 0;">0000/00/00 00:00:00</div>
<div class="t" style="left:672.30px;top:1123.86px;font-size:22px;color:#000;letter-spacing:0;transform:scaleX(0.9304);transform-origin:0 0;">QJ61BT11N</div>
<div class="t" style="left:895.20px;top:1123.78px;font-size:22px;color:#000;letter-spacing:0;transform:scaleX(0.9811);transform-origin:0 0;">0020</div>
<div class="a" style="left:52px;top:1149.86px;width:110px;height:29.58px;background:#e1e8fc"></div>
<div class="a" style="left:164px;top:1149.86px;width:182px;height:29.58px;background:#e1e8fc"></div>
<div class="a" style="left:348px;top:1149.86px;width:281px;height:29.58px;background:#e1e8fc"></div>
<div class="a" style="left:631px;top:1149.86px;width:195px;height:29.58px;background:#e1e8fc"></div>
<div class="a" style="left:828px;top:1149.86px;width:183px;height:29.58px;background:#e1e8fc"></div>
<div class="t" style="left:76.30px;top:1155.36px;font-size:22px;color:#000;letter-spacing:0;transform:scaleX(0.9676);transform-origin:0 0;">00019</div>
<div class="t" style="left:229.40px;top:1155.36px;font-size:22px;color:#000;letter-spacing:0;transform:scaleX(0.8884);transform-origin:0 0;">BBC5</div>
<div class="t" style="left:385.90px;top:1155.36px;font-size:22px;color:#000;letter-spacing:0;transform:scaleX(1.0120);transform-origin:0 0;">0000/00/00 00:00:00</div>
<div class="t" style="left:672.30px;top:1155.44px;font-size:22px;color:#000;letter-spacing:0;transform:scaleX(0.9304);transform-origin:0 0;">QJ61BT11N</div>
<div class="t" style="left:895.20px;top:1155.36px;font-size:22px;color:#000;letter-spacing:0;transform:scaleX(0.9811);transform-origin:0 0;">0020</div>
<div class="a" style="left:52px;top:1181.44px;width:110px;height:29.58px;background:#fff"></div>
<div class="a" style="left:164px;top:1181.44px;width:182px;height:29.58px;background:#fff"></div>
<div class="a" style="left:348px;top:1181.44px;width:281px;height:29.58px;background:#fff"></div>
<div class="a" style="left:631px;top:1181.44px;width:195px;height:29.58px;background:#fff"></div>
<div class="a" style="left:828px;top:1181.44px;width:183px;height:29.58px;background:#fff"></div>
<div class="t" style="left:76.30px;top:1186.94px;font-size:22px;color:#000;letter-spacing:0;transform:scaleX(0.9676);transform-origin:0 0;">00018</div>
<div class="t" style="left:229.40px;top:1186.94px;font-size:22px;color:#000;letter-spacing:0;transform:scaleX(0.8884);transform-origin:0 0;">BBC5</div>
<div class="t" style="left:385.90px;top:1186.94px;font-size:22px;color:#000;letter-spacing:0;transform:scaleX(1.0120);transform-origin:0 0;">0000/00/00 00:00:00</div>
<div class="t" style="left:672.30px;top:1187.02px;font-size:22px;color:#000;letter-spacing:0;transform:scaleX(0.9304);transform-origin:0 0;">QJ61BT11N</div>
<div class="t" style="left:895.20px;top:1186.94px;font-size:22px;color:#000;letter-spacing:0;transform:scaleX(0.9811);transform-origin:0 0;">0020</div>
<div class="a" style="left:1012px;top:581px;width:3px;height:632px;background:#fff"></div>
<div class="a" style="left:1012px;top:582px;width:2px;height:30px;background:#8a8a8a"></div>
<div class="a" style="left:1015px;top:581px;width:32px;height:632px;background:#f0f0f0"></div>
<div class="a" style="left:1016px;top:614.5px;width:29px;height:298px;background:#cdcdcd"></div>
<svg class="a" style="left:1000px;top:580px" width="50" height="40" viewBox="1000 580 50 40"><polygon points="1023,600.5 1030,593 1037,600.5 1037,605 1030,597.5 1023,605" fill="#606060"/></svg>
<svg class="a" style="left:1000px;top:1180px" width="50" height="40" viewBox="1000 1180 50 40"><polygon points="1023,1191.4 1030,1198.9 1037,1191.4 1037,1195.9 1030,1203.4 1023,1195.9" fill="#606060"/></svg>
<div class="btn" style="left:36px;top:1237px;width:235px;height:45px"></div>
<div class="t" style="left:55.00px;top:1247.75px;font-size:23.5px;color:#000;transform:scaleX(1.0296);transform-origin:0 0;">错误履历清除<span class="l" style="font-size:21px;letter-spacing:0px">(</span><u><span class="l" style="font-size:21px;letter-spacing:0px">E</span></u><span class="l" style="font-size:21px;letter-spacing:0px">)...</span></div>
<div class="sep" style="left:24px;top:1296px;width:1726px"></div>
<div class="a" style="left:35px;top:1305px;width:236px;height:47px;border:1px solid #5a5a5a"></div>
<div class="btn" style="left:36px;top:1306px;width:234px;height:45px"></div>
<svg class="a" style="left:42px;top:1313px" width="222" height="32" viewBox="0 0 222 32"><rect x="1" y="1" width="220" height="30" fill="none" stroke="#000" stroke-width="1.6" stroke-dasharray="1.6 2.2"/></svg>
<div class="t" style="left:43.20px;top:1314.30px;font-size:23.5px;color:#000;">更新为最新的信息<span class="l" style="font-size:21px;letter-spacing:0px">(</span><u><span class="l" style="font-size:21px;letter-spacing:0px">R</span></u><span class="l" style="font-size:21px;letter-spacing:0px">)</span></div>
<div class="btn" style="left:1274px;top:1306px;width:258px;height:45px"></div>
<div class="t" style="left:1309.20px;top:1316.95px;font-size:23.5px;color:#000;transform:scaleX(1.0201);transform-origin:0 0;"><span class="l" style="font-size:21px;letter-spacing:0px">CSV</span>文件生成<span class="l" style="font-size:21px;letter-spacing:0px">(</span><u><span class="l" style="font-size:21px;letter-spacing:0px">F</span></u><span class="l" style="font-size:21px;letter-spacing:0px">)...</span></div>
<div class="btn" style="left:1602px;top:1306px;width:148px;height:45px"></div>
<div class="t" style="left:1649.40px;top:1317.35px;font-size:23.5px;color:#000;">关闭</div>
<div class="t" style="left:1085.60px;top:497.15px;font-size:23.5px;color:#0000ff;">错误详细</div>
<div class="sep" style="left:1199px;top:504px;width:549px"></div>
<div class="t" style="left:1114.00px;top:537.75px;font-size:23.5px;color:#000;">型号</div>
<div class="t" style="left:1273.80px;top:532.00px;font-size:22px;color:#000;transform:scaleX(0.9264);transform-origin:0 0;letter-spacing:0">QJ61BT11N</div>
<div class="t" style="left:1113.00px;top:580.75px;font-size:23.5px;color:#000;">起始<i class="s"><span class="l" style="font-size:21px;letter-spacing:0px">I</span></i><span class="l" style="font-size:21px;letter-spacing:0px">/O</span></div>
<div class="t" style="left:1274.80px;top:580.40px;font-size:22px;color:#000;transform:scaleX(0.9796);transform-origin:0 0;letter-spacing:0">0020</div>
<div class="t" style="left:1113.00px;top:629.60px;font-size:23.5px;color:#000;">安装位置</div>
<div class="t" style="left:1275.60px;top:629.70px;font-size:23.5px;color:#000;">主基板 第<span class="l" style="font-size:21px;letter-spacing:0px">1</span>个插槽</div>
<div class="a" style="left:1099px;top:714px;width:651px;height:569px;border-style:solid;border-width:2px 3px 3px 2px;border-color:#fff #696969 #696969 #fff"></div>
<div class="a" style="left:1278px;top:680px;width:164px;height:35px;border-style:solid;border-width:2px 2px 0 0;border-color:#fff #7a7a7a #7a7a7a #fff;background:#f0f0f0;box-shadow:inset -1px 0 0 #a8a8a8"></div>
<div class="t" style="left:1286.20px;top:687.50px;font-size:23.5px;color:#000;">智能模块信息</div>
<div class="a" style="left:1099px;top:675px;width:181px;height:42px;border-style:solid;border-width:2px 2px 0 2px;border-color:#fff #7a7a7a #7a7a7a #fff;background:#f0f0f0;box-shadow:inset -1px 0 0 #a8a8a8"></div>
<div class="t" style="left:1114.00px;top:683.00px;font-size:23.5px;color:#000;">错误内容·处理</div>
<div class="t" style="left:1128.20px;top:759.00px;font-size:23.5px;color:#000;">内容</div>
<div class="sunk" style="left:1130px;top:795px;width:565px;height:136px"></div>
<div class="a" style="left:1660px;top:798px;width:1px;height:131px;background:#fff"></div>
<svg class="a" style="left:1667px;top:808px" width="18" height="14" viewBox="0 0 18 14"><path d="M2 11 L9 4 L16 11" fill="none" stroke="#c0c0c0" stroke-width="2.5"/></svg>
<svg class="a" style="left:1667px;top:905px" width="18" height="14" viewBox="0 0 18 14"><path d="M2 3 L9 10 L16 3" fill="none" stroke="#c0c0c0" stroke-width="2.5"/></svg>
<div class="t" style="left:1141.00px;top:803.35px;font-size:23.5px;color:#000;">主站重复错误</div>
<div class="t" style="left:1140.20px;top:828.80px;font-size:23.5px;color:#000;transform:scaleX(1.0161);transform-origin:0 0;">·同一线路上存在多个主站<span style="position:relative;top:-6px;left:2px">。</span>或重启电源时检测出</div>
<div class="t" style="left:1141.60px;top:855.50px;font-size:23.5px;color:#000;transform:scaleX(1.0368);transform-origin:0 0;">线路上的噪声<span style="position:relative;top:-6px;left:2px">。</span></div>
<div class="t" style="left:1130.00px;top:947.75px;font-size:23.5px;color:#000;">处理</div>
<div class="sunk" style="left:1130px;top:987px;width:565px;height:182px"></div>
<div class="a" style="left:1660px;top:990px;width:1px;height:177px;background:#fff"></div>
<svg class="a" style="left:1667px;top:1000px" width="18" height="14" viewBox="0 0 18 14"><path d="M2 11 L9 4 L16 11" fill="none" stroke="#c0c0c0" stroke-width="2.5"/></svg>
<svg class="a" style="left:1667px;top:1144px" width="18" height="14" viewBox="0 0 18 14"><path d="M2 3 L9 10 L16 3" fill="none" stroke="#c0c0c0" stroke-width="2.5"/></svg>
<div class="t" style="left:1140.20px;top:994.80px;font-size:23.5px;color:#000;transform:scaleX(1.0114);transform-origin:0 0;">·将同一线路上的主站设置为<span class="l" style="font-size:21px;letter-spacing:0px">1</span>台<span style="position:relative;top:-6px;left:2px">。</span>或将主站重复</div>
<div class="t" style="left:1141.60px;top:1021.10px;font-size:23.5px;color:#000;transform:scaleX(0.9980);transform-origin:0 0;">错误解除请求<span class="l" style="font-size:21px;letter-spacing:0px">(SB0007)</span>设置为<span class="l" style="font-size:21px;letter-spacing:0px">ON</span>状态，开始数据</div>
<div class="t" style="left:1141.60px;top:1046.15px;font-size:23.5px;color:#000;transform:scaleX(1.0245);transform-origin:0 0;">链接时，检查线路状态<span style="position:relative;top:-6px;left:2px">。</span></div>
</body></html>
